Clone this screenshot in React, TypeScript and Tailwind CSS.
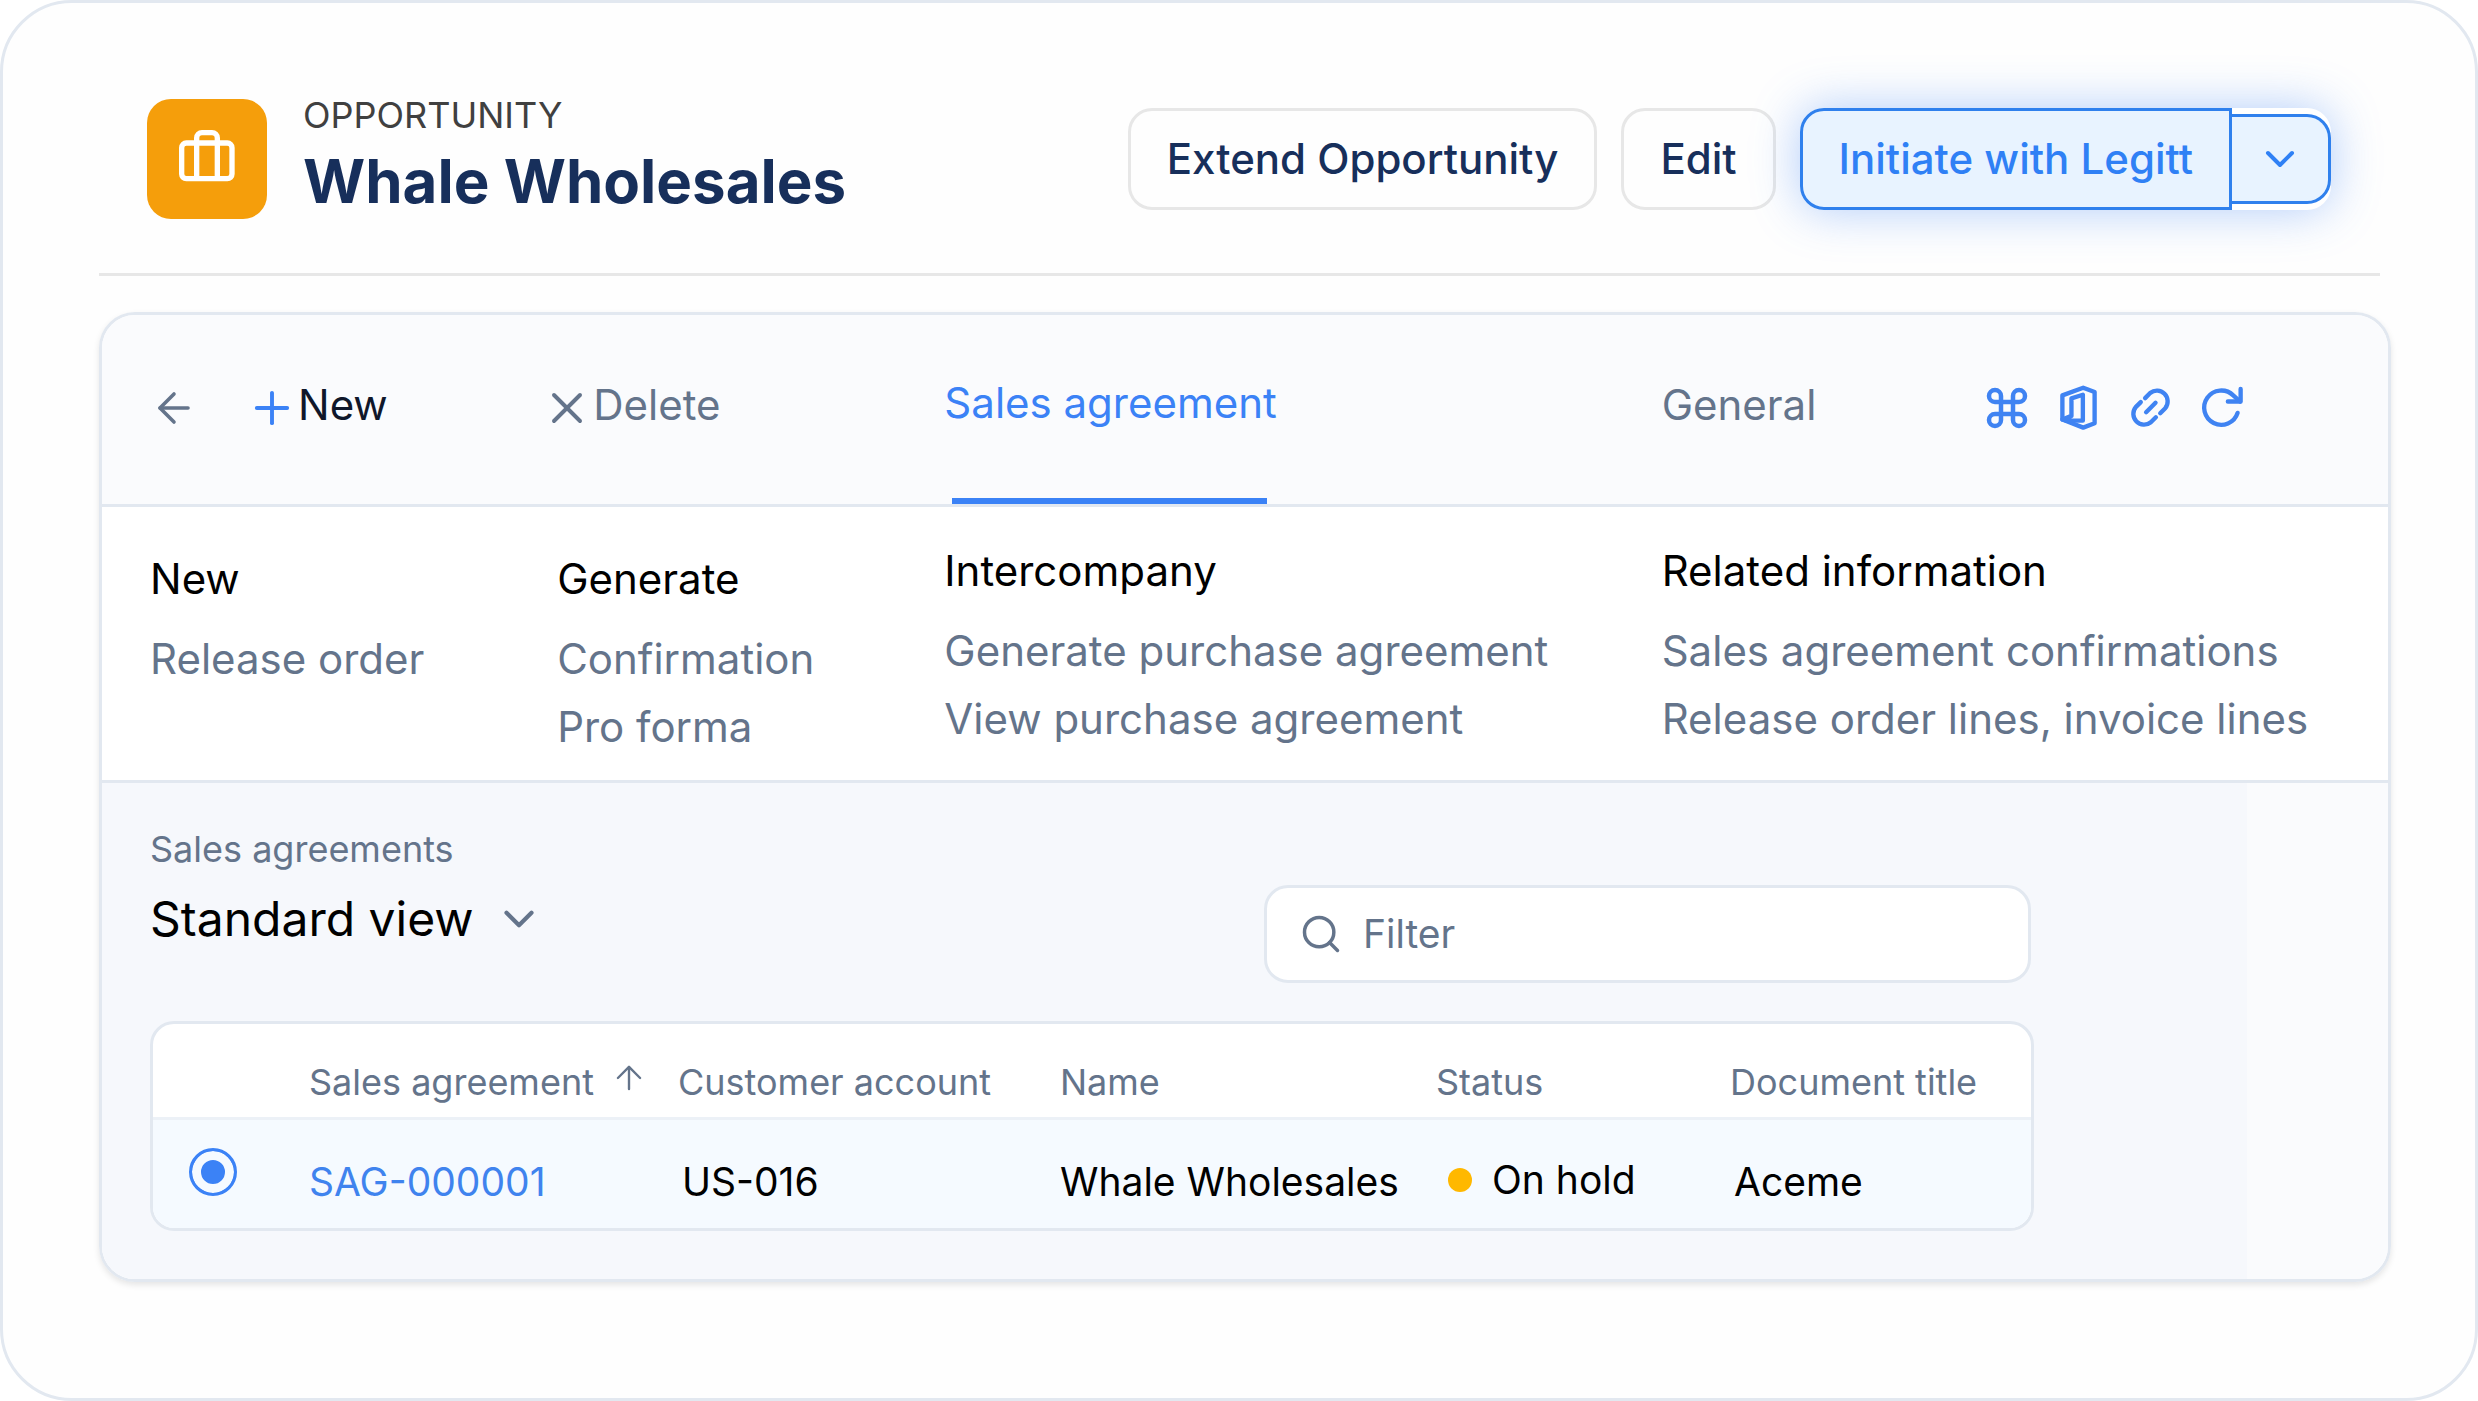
import type { ReactNode } from 'react';
import { ArrowLeft, ArrowUp, ChevronDown, Command, Plus, Search, X } from 'lucide-react';

const menuGroups = [
  { title: 'New', items: ['Release order'], lowered: true },
  { title: 'Generate', items: ['Confirmation', 'Pro forma'], lowered: true },
  { title: 'Intercompany', items: ['Generate purchase agreement', 'View purchase agreement'] },
  { title: 'Related information', items: ['Sales agreement confirmations', 'Release order lines, invoice lines'] },
];

const agreements = [
  { id: 'SAG-000001', account: 'US-016', name: 'Whale Wholesales', status: 'On hold', title: 'Aceme' },
];

const LuggageIcon = () => (
  <svg className="mb-1.5 h-[52px] w-14" viewBox="0 0 168 156" fill="none" stroke="#fff" strokeWidth="16">
    <rect x="8" y="39" width="151" height="107" rx="14" />
    <path d="M53 146V24a16 16 0 0 1 16-16h30a16 16 0 0 1 16 16v122" />
  </svg>
);

const ActionIcon = ({ children }: { children: ReactNode }) => (
  <svg
    className="size-[47px]"
    viewBox="0 0 140 140"
    fill="none"
    stroke="currentColor"
    strokeWidth="13"
    strokeLinecap="round"
    strokeLinejoin="round"
  >
    {children}
  </svg>
);

const IconButton = ({ label, children }: { label: string; children: ReactNode }) => (
  <button type="button" aria-label={label} className="flex size-12 items-center justify-center">
    {children}
  </button>
);

const Header = () => (
  <header className="mr-[11px] flex items-center justify-between border-b-3 border-[#e7e7e7] pr-[49px] pb-[54px] pl-12">
    <div className="flex h-[120px] items-center gap-9">
      <div className="flex size-[120px] items-center justify-center rounded-3xl bg-[#f59e0b]">
        <LuggageIcon />
      </div>
      <div>
        <p className="text-[36px] leading-9 text-[#404040]">OPPORTUNITY</p>
        <h1 className="mt-2 text-[60px] leading-[80px] font-bold text-[#172f5b]">Whale Wholesales</h1>
      </div>
    </div>
    <div className="flex items-center gap-6 text-[42px] leading-[60px] font-medium text-[#172f5b]">
      <button type="button" className="rounded-3xl border-3 border-[#e7e7e7] px-9 py-[18px]">Extend Opportunity</button>
      <button type="button" className="rounded-3xl border-3 border-[#e7e7e7] px-9 py-[18px]">Edit</button>
      <div className="flex items-center rounded-3xl bg-white text-[#2f80f5] shadow-[0_0_48px_rgba(59,130,246,0.4)]">
        <button type="button" className="rounded-l-3xl border-3 border-[#2f80ed] bg-[#e8f3ff] px-9 py-[18px]">
          Initiate with Legitt
        </button>
        <button
          type="button"
          aria-label="More actions"
          className="flex h-[90px] w-[99px] items-center justify-center rounded-r-3xl border-3 border-l-0 border-[#2f80ed] bg-[#e8f3ff]"
        >
          <ChevronDown size={48} strokeWidth={2} />
        </button>
      </div>
    </div>
  </header>
);

const Toolbar = () => (
  <div className="grid h-48 grid-cols-[407fr_387fr_717fr_726fr] border-b-3 border-[#e2e8f0] bg-[#fafbfd] pl-12 text-[42px] leading-[60px] text-[#64748b]">
    <div className="flex items-center gap-12 pb-1">
      <IconButton label="Back"><ArrowLeft size={52} strokeWidth={1.8} /></IconButton>
      <button type="button" className="flex items-center text-[#0f172a]">
        <Plus size={52} strokeWidth={1.8} className="text-[#3b82f6]" />
        <span className="pb-1.5">New</span>
      </button>
    </div>
    <div className="-ml-4 flex items-center pb-1">
      <button type="button" className="flex items-center">
        <X size={52} strokeWidth={1.8} />
        <span className="pb-1.5">Delete</span>
      </button>
    </div>
    <div className="flex">
      <button type="button" className="flex flex-col text-[#3b82f6]">
        <span className="flex flex-1 items-center pb-2">Sales agreement</span>
        <span className="ml-2 h-1.5 w-[315px] bg-[#3b82f6]" />
      </button>
    </div>
    <div className="flex items-center justify-between pr-[141px] pb-1">
      <button type="button" className="pb-1.5">General</button>
      <div className="flex gap-6 text-[#3f83f2]">
        <IconButton label="Shortcuts"><Command size={48} strokeWidth={2.25} /></IconButton>
        <IconButton label="Open in Office">
          <ActionIcon>
            <path d="M22 34 84 11l34 13v93l-34 13-62-24z" />
            <path d="M22 106l27-11V43l34-11v77H32" />
          </ActionIcon>
        </IconButton>
        <IconButton label="Copy link">
          <ActionIcon>
            <path d="M54 42l15-15a32 32 0 0 1 45 45L99 87" />
            <path d="M41 54 26 69a32 32 0 0 0 45 45l15-15" />
            <path d="M57 84l28-28" />
          </ActionIcon>
        </IconButton>
        <IconButton label="Refresh">
          <ActionIcon>
            <path d="M115 86A51 51 0 1 1 102 34l20 18" />
            <path d="M124 15v37H86" />
          </ActionIcon>
        </IconButton>
      </div>
    </div>
  </div>
);

const ActionMenu = () => (
  <div className="grid h-[276px] grid-cols-[407fr_387fr_717fr_726fr] border-b-3 border-[#e2e8f0] bg-white pt-[30px] pl-12 text-[42px]">
    {menuGroups.map(group => (
      <section key={group.title} className={group.lowered ? 'pt-2' : ''}>
        <h2 className="mb-3 leading-[68px] text-black">{group.title}</h2>
        <ul>
          {group.items.map(item => (
            <li key={item} className="leading-[68px] whitespace-nowrap text-[#64748b]">
              <button type="button">{item}</button>
            </li>
          ))}
        </ul>
      </section>
    ))}
  </div>
);

const AgreementsTable = () => (
  <div className="overflow-hidden rounded-3xl border-3 border-[#e2e8f0] bg-white">
    <table className="w-full table-fixed text-left">
      <colgroup>
        <col className="w-[156px]" />
        <col className="w-[369px]" />
        <col className="w-[382px]" />
        <col className="w-[376px]" />
        <col className="w-[294px]" />
        <col />
      </colgroup>
      <thead>
        <tr className="h-[94px] border-b-3 border-[#ecf1f7] text-[36px] leading-[48px] whitespace-nowrap text-[#64748b]">
          <th aria-label="Selected" />
          <th scope="col" className="pt-6 font-normal">
            <button type="button" className="flex items-center gap-4">
              Sales agreement
              <ArrowUp size={38} strokeWidth={1.5} className="mb-2" />
            </button>
          </th>
          <th scope="col" className="pt-6 font-normal">Customer account</th>
          <th scope="col" className="pt-6 font-normal">Name</th>
          <th scope="col" className="pt-6 font-normal">Status</th>
          <th scope="col" className="pt-6 font-normal">Document title</th>
        </tr>
      </thead>
      <tbody>
        {agreements.map(row => (
          <tr key={row.id} className="h-[110px] bg-[#f5faff] text-[39px] leading-[48px] whitespace-nowrap text-black">
            <td className="pb-1 pl-9">
              <input
                type="radio"
                name="agreement"
                defaultChecked
                aria-label={`Select ${row.id}`}
                className="block size-12 appearance-none rounded-full border-3 border-[#3b82f6] bg-white checked:bg-[#3b82f6] checked:shadow-[inset_0_0_0_9px_#f5faff]"
              />
            </td>
            <td className="pt-4"><a href="#" className="text-[#3f83ee]">{row.id}</a></td>
            <td className="pt-4 pl-1">{row.account}</td>
            <td className="pt-4">{row.name}</td>
            <td className="pt-3">
              <span className="flex items-center gap-5 pl-3">
                <span className="size-6 rounded-full bg-[#ffb800]" />
                {row.status}
              </span>
            </td>
            <td className="pt-4 pl-1">{row.title}</td>
          </tr>
        ))}
      </tbody>
    </table>
  </div>
);

const AgreementsView = () => (
  <div className="bg-[#fafbfd] pr-[141px]">
    <div className="bg-[#f6f8fc] pt-[42px] pr-[213px] pb-12 pl-12">
      <div className="flex items-end justify-between pb-[38px]">
        <div className="pb-8">
          <p className="text-[36px] leading-[48px] text-[#64748b]">Sales agreements</p>
          <button type="button" className="mt-3.5 flex items-center gap-5 text-[48px] leading-[64px] text-black">
            Standard view
            <ChevronDown size={50} strokeWidth={2} className="text-[#64748b]" />
          </button>
        </div>
        <label className="mr-[3px] flex h-[98px] w-[767px] items-center gap-5 rounded-3xl border-3 border-[#e2e8f0] bg-white px-8 text-[#64748b]">
          <Search size={44} strokeWidth={1.9} />
          <input
            type="text"
            aria-label="Filter"
            placeholder="Filter"
            className="min-w-0 flex-1 text-[39px] leading-[48px] outline-none placeholder:text-[#64748b]"
          />
        </label>
      </div>
      <AgreementsTable />
    </div>
  </div>
);

export default function App() {
  return (
    <div className="min-h-screen bg-white font-['Inter',sans-serif]">
      <main className="min-h-screen rounded-[72px] border-3 border-[#e2e8f0] bg-[#fefefe] pt-24 pr-[84px] pb-24 pl-24">
        <Header />
        <div className="mt-9 overflow-hidden rounded-[36px] border-3 border-[#e2e8f0] shadow-[0_3px_6px_rgba(0,0,0,0.1)]">
          <Toolbar />
          <ActionMenu />
          <AgreementsView />
        </div>
      </main>
    </div>
  );
}
